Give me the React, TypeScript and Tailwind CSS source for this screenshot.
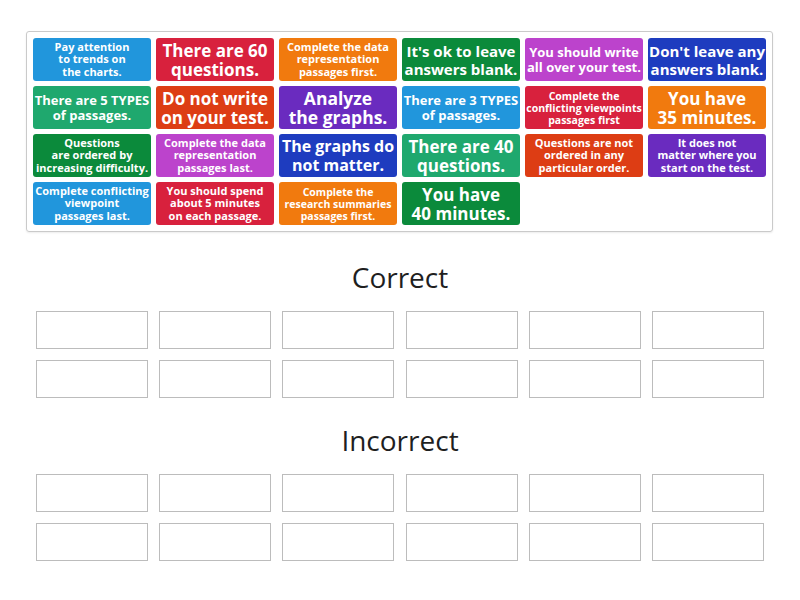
import React from "react";

interface Card {
    lines: string[];
    color: string;
    size: string;
}

// 9-colour cycle as on the board
const BLUE = "bg-[#2196dc]";
const CRIMSON = "bg-[#d8213d]";
const ORANGE = "bg-[#f17a0e]";
const DKGREEN = "bg-[#0b8a3b]";
const ORCHID = "bg-[#bc43cc]";
const NAVY = "bg-[#1e3cbf]";
const TEAL = "bg-[#1fa86e]";
const REDORANGE = "bg-[#dd3d14]";
const PURPLE = "bg-[#6a2bbf]";

const XS = "text-[10.5px] leading-[12px]";
const SM = "text-[11px] leading-[12.4px]";
const MD = "text-[13px] leading-[15px]";
const LG = "text-[15px] leading-[18px]";
const LG2 = "text-[16px] leading-[18.5px]";
const XL = "text-[17px] leading-[19px]";
const XXL = "text-[17.5px] leading-[19px]";

const cards: Card[] = [
    { lines: ["Pay attention", "to trends on", "the charts."], color: BLUE, size: SM },
    { lines: ["There are 60", "questions."], color: CRIMSON, size: XL },
    { lines: ["Complete the data", "representation", "passages first."], color: ORANGE, size: SM },
    { lines: ["It's ok to leave", "answers blank."], color: DKGREEN, size: LG },
    { lines: ["You should write", "all over your test."], color: ORCHID, size: MD },
    { lines: ["Don't leave any", "answers blank."], color: NAVY, size: LG },

    { lines: ["There are 5 TYPES", "of passages."], color: TEAL, size: MD },
    { lines: ["Do not write", "on your test."], color: REDORANGE, size: XL },
    { lines: ["Analyze", "the graphs."], color: PURPLE, size: XXL },
    { lines: ["There are 3 TYPES", "of passages."], color: BLUE, size: MD },
    { lines: ["Complete the", "conflicting viewpoints", "passages first"], color: CRIMSON, size: XS },
    { lines: ["You have", "35 minutes."], color: ORANGE, size: XL },

    { lines: ["Questions", "are ordered by", "increasing difficulty."], color: DKGREEN, size: SM },
    { lines: ["Complete the data", "representation", "passages last."], color: ORCHID, size: SM },
    { lines: ["The graphs do", "not matter."], color: NAVY, size: LG2 },
    { lines: ["There are 40", "questions."], color: TEAL, size: XL },
    { lines: ["Questions are not", "ordered in any", "particular order."], color: REDORANGE, size: SM },
    { lines: ["It does not", "matter where you", "start on the test."], color: PURPLE, size: SM },

    { lines: ["Complete conflicting", "viewpoint", "passages last."], color: BLUE, size: SM },
    { lines: ["You should spend", "about 5 minutes", "on each passage."], color: CRIMSON, size: SM },
    { lines: ["Complete the", "research summaries", "passages first."], color: ORANGE, size: XS },
    { lines: ["You have", "40 minutes."], color: DKGREEN, size: XL },
];

const DropSection = ({ title, top }: { title: string; top: string }) => (
    <div className={`${top} flex flex-col items-center`}>
        <h2 className="text-[28px] leading-[36px] text-[#1f1f1f] font-normal">{title}</h2>
        <div className="mt-[16px] grid grid-cols-[repeat(6,112px)] gap-x-[11.3px] gap-y-[11px]">
            {Array.from({ length: 12 }).map((_, i) => (
                <div key={i} className="h-[38px] bg-white border border-[#bcbcbc]" />
            ))}
        </div>
    </div>
);

const App = () => {
    return (
        <div className="w-[800px] h-[600px] bg-white overflow-hidden" style={{ fontFamily: "'Open Sans', sans-serif" }}>
            {/* CARD BANK */}
            <div className="mt-[31px] ml-[26px] w-[747px] border border-[#cacaca] rounded-[3px] px-[6px] py-[6px] shadow-[0_1px_2px_rgba(0,0,0,0.08)]">
                <div className="grid grid-cols-[repeat(6,118px)] gap-x-[5px] gap-y-[5px]">
                    {cards.map((c, i) => (
                        <div
                            key={i}
                            className={`h-[43px] rounded-[3px] ${c.color} text-white font-bold flex flex-col items-center justify-center text-center whitespace-nowrap ${c.size}`}>
                            {c.lines.map((l, j) => (
                                <div key={j}>{l}</div>
                            ))}
                        </div>
                    ))}
                </div>
            </div>

            {/* DROP ZONES */}
            <DropSection title="Correct" top="mt-[27px]" />
            <DropSection title="Incorrect" top="mt-[24px]" />
        </div>
    );
};

export default App;
